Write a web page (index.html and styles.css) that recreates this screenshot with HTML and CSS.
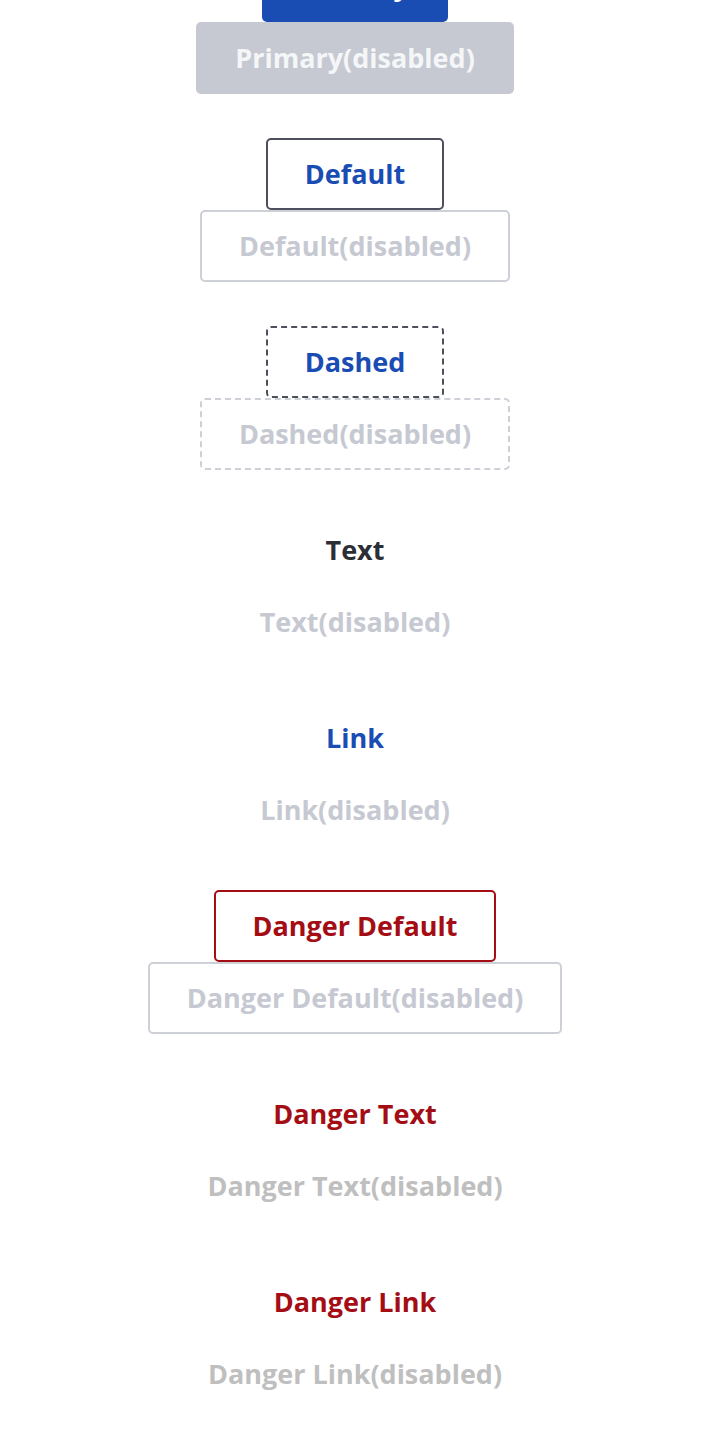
FILE: index.html
```html
<!DOCTYPE html>
<html lang="en">
<head>
<meta charset="utf-8">
<title>Buttons</title>
<link rel="stylesheet" href="styles.css">
</head>
<body>
<main class="stack">
  <div class="group">
    <button class="btn btn-primary">Primary</button>
    <button class="btn btn-primary" disabled>Primary(disabled)</button>
  </div>
  <div class="group">
    <button class="btn btn-default">Default</button>
    <button class="btn btn-default" disabled>Default(disabled)</button>
  </div>
  <div class="group">
    <button class="btn btn-dashed">Dashed</button>
    <button class="btn btn-dashed" disabled>Dashed(disabled)</button>
  </div>
  <div class="group">
    <button class="btn btn-text">Text</button>
    <button class="btn btn-text" disabled>Text(disabled)</button>
  </div>
  <div class="group">
    <button class="btn btn-link">Link</button>
    <button class="btn btn-link" disabled>Link(disabled)</button>
  </div>
  <div class="group">
    <button class="btn btn-danger-default">Danger Default</button>
    <button class="btn btn-danger-default" disabled>Danger Default(disabled)</button>
  </div>
  <div class="group">
    <button class="btn btn-danger-text">Danger Text</button>
    <button class="btn btn-danger-text" disabled>Danger Text(disabled)</button>
  </div>
  <div class="group">
    <button class="btn btn-danger-link">Danger Link</button>
    <button class="btn btn-danger-link" disabled>Danger Link(disabled)</button>
  </div>
</main>
</body>
</html>
```

FILE: styles.css
```css
html, body {
  margin: 0;
  padding: 0;
  background: #ffffff;
}

body {
  font-family: "Open Sans", "Noto Sans", sans-serif;
}

.stack {
  display: flex;
  flex-direction: column;
  align-items: center;
  gap: 44px;
  padding: 22px;
  margin-top: -72px;
}

.group {
  display: flex;
  flex-direction: column;
  align-items: center;
}

.btn {
  font-family: "Open Sans", "Noto Sans", sans-serif;
  font-size: 27px;
  font-weight: 700;
  line-height: 36px;
  padding: 16px 37px;
  border: 2px solid transparent;
  border-radius: 5px;
  background: transparent;
  cursor: pointer;
  margin: 0;
}

.btn-primary {
  background: #1a4db3;
  color: #ffffff;
}
.btn-primary:disabled {
  background: #c6c9d1;
  color: #f5f6f8;
}

.btn-default {
  background: #ffffff;
  border-color: #4d505c;
  color: #1a4db3;
}
.btn-default:disabled {
  border-color: #cdd0d7;
  color: #c6c9d1;
}

.btn-dashed {
  background: #ffffff;
  border: 2px dashed #4d505c;
  color: #1a4db3;
}
.btn-dashed:disabled {
  border-color: #cdd0d7;
  color: #c6c9d1;
}

.btn-text {
  color: #2b2e35;
}
.btn-text:disabled {
  color: #c6c9d1;
}

.btn-link {
  color: #1a4db3;
}
.btn-link:disabled {
  color: #c6c9d1;
}

.btn-danger-default {
  background: #ffffff;
  border-color: #a50d14;
  color: #a50d14;
}
.btn-danger-default:disabled {
  border-color: #cdd0d7;
  color: #c6c9d1;
}

.btn-danger-text {
  color: #a50d14;
}
.btn-danger-text:disabled {
  color: #bfbfbf;
}

.btn-danger-link {
  color: #a50d14;
}
.btn-danger-link:disabled {
  color: #bfbfbf;
}
```
